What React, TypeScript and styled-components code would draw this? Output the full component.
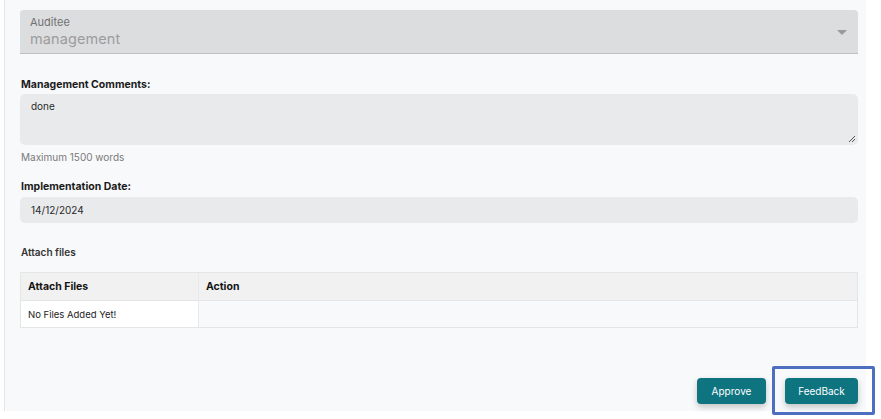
import React from "react";
import styled, { createGlobalStyle } from "styled-components";

const Global = createGlobalStyle`
  html, body { margin: 0; padding: 0; background: #ffffff; }
  body { font-family: "Inter", "Open Sans", sans-serif; }
  * { box-sizing: border-box; }
`;

const Page = styled.div`
  width: 881px;
  height: 419px;
  overflow: hidden;
  background: #ffffff;
  position: relative;
`;

const CutLine = styled.div`
  height: 4px;
  overflow: hidden;
  display: flex;
  align-items: flex-end;
  padding-left: 110px;
  font-size: 14px;
  line-height: 14px;
  color: #222;
  white-space: pre;
`;

const CutText = styled.span`
  transform: translateY(-10px);
  display: block;
`;

const Panel = styled.div`
  margin-left: 4px;
  width: 862px;
  height: 411px;
  margin-top: -4px;
  background: #f8f9fa;
  border-left: 1px solid #e4e6e8;
  padding: 10px 8px 0 15px;
  display: flex;
  flex-direction: column;
`;

const Select = styled.div`
  height: 44px;
  width: 838px;
  background: #dcdddf;
  border-bottom: 1px solid #bfc0c2;
  border-radius: 4px 4px 0 0;
  padding: 1px 10px 0 10px;
  display: flex;
  align-items: center;
  justify-content: space-between;
`;

const SelectText = styled.div`
  display: flex;
  flex-direction: column;
`;

const SelectLabel = styled.span`
  font-size: 11px;
  line-height: 13px;
  color: #707070;
`;

const SelectValue = styled.span`
  font-size: 14.5px;
  line-height: 19px;
  color: #9c9c9c;
  letter-spacing: 0.1px;
`;

const Arrow = styled.span`
  width: 0;
  height: 0;
  border-left: 5px solid transparent;
  border-right: 5px solid transparent;
  border-top: 5px solid #9a9a9a;
  margin-right: 1px;
  margin-top: 0;
`;

const FieldLabel = styled.div<{ $top: number }>`
  margin-top: ${(p) => p.$top}px;
  font-size: 10.5px;
  line-height: 14px;
  font-weight: 700;
  color: #1b1b1b;
  padding-left: 1px;
`;

const TextArea = styled.div`
  margin-top: 2px;
  width: 838px;
  height: 51px;
  background: #e9eaec;
  border-radius: 5px;
  padding: 6px 11px;
  font-size: 10px;
  line-height: 12px;
  color: #2a2a2a;
  position: relative;
`;

const Resize = styled.svg`
  position: absolute;
  right: 2px;
  bottom: 2px;
`;

const Hint = styled.div`
  margin-top: 6px;
  font-size: 10px;
  line-height: 12px;
  color: #7a7a7a;
  padding-left: 1px;
`;

const DateInput = styled.div`
  margin-top: 3px;
  width: 838px;
  height: 26px;
  background: #e9eaec;
  border-radius: 5px;
  padding: 0 11px;
  display: flex;
  align-items: center;
  font-size: 10px;
  color: #2a2a2a;
`;

const SectionTitle = styled.div`
  margin-top: 23px;
  font-size: 10px;
  line-height: 12px;
  font-weight: 600;
  color: #333;
  padding-left: 1px;
`;

const Table = styled.div`
  margin-top: 14px;
  width: 838px;
  display: grid;
  grid-template-columns: 178px 1fr;
  border: 1px solid #e4e5e7;
`;

const Cell = styled.div<{ $head?: boolean; $bg: string; $last?: boolean }>`
  height: ${(p) => (p.$head ? 28 : 26)}px;
  background: ${(p) => p.$bg};
  display: flex;
  align-items: center;
  padding-left: 7px;
  font-size: ${(p) => (p.$head ? 10.5 : 9.5)}px;
  font-weight: ${(p) => (p.$head ? 700 : 400)};
  color: ${(p) => (p.$head ? "#141414" : "#222")};
  border-right: ${(p) => (p.$last ? "none" : "1px solid #e8e9eb")};
  border-bottom: ${(p) => (p.$head ? "1px solid #e4e5e7" : "none")};
`;

const Actions = styled.div`
  margin-top: auto;
  margin-bottom: 7px;
  display: flex;
  justify-content: flex-end;
  gap: 19px;
`;

const Button = styled.button<{ $w: number }>`
  width: ${(p) => p.$w}px;
  height: 26px;
  border: none;
  border-radius: 4px;
  background: #0e7480;
  color: #ffffff;
  font-family: inherit;
  font-size: 10px;
  box-shadow: 0 3px 6px rgba(0, 0, 0, 0.22);
  position: relative;
  cursor: pointer;
`;

const Highlight = styled.span`
  position: absolute;
  left: -13px;
  top: -12px;
  width: 103px;
  height: 49px;
  border: 3px solid #4c70bf;
  border-radius: 2px;
  pointer-events: none;
`;

export default function App() {
  return (
    <Page>
      <Global />
      <CutLine>
        <CutText>{"y,                                                        g           p"}</CutText>
      </CutLine>
      <Panel>
        <Select>
          <SelectText>
            <SelectLabel>Auditee</SelectLabel>
            <SelectValue>management</SelectValue>
          </SelectText>
          <Arrow />
        </Select>

        <FieldLabel $top={24}>Management Comments:</FieldLabel>
        <TextArea>
          done
          <Resize width="8" height="8" viewBox="0 0 8 8">
            <path d="M7 1 L1 7 M7 4 L4 7" stroke="#555" strokeWidth="1" />
          </Resize>
        </TextArea>
        <Hint>Maximum 1500 words</Hint>

        <FieldLabel $top={17}>Implementation Date:</FieldLabel>
        <DateInput>14/12/2024</DateInput>

        <SectionTitle>Attach files</SectionTitle>
        <Table>
          <Cell $head $bg="#f1f1f1">Attach Files</Cell>
          <Cell $head $bg="#f1f1f1" $last>Action</Cell>
          <Cell $bg="#ffffff">No Files Added Yet!</Cell>
          <Cell $bg="#f8f9fa" $last />
        </Table>

        <Actions>
          <Button $w={69}>Approve</Button>
          <Button $w={73}>
            FeedBack
            <Highlight />
          </Button>
        </Actions>
      </Panel>
    </Page>
  );
}
